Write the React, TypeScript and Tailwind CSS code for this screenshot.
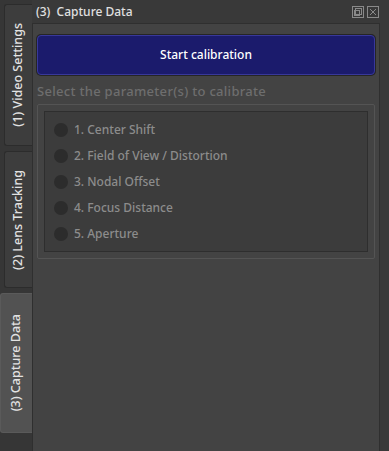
import React from 'react';

const tabs = [
  { label: '(1) Video Settings', h: 'h-[142px]', active: false },
  { label: '(2) Lens Tracking', h: 'h-[137px]', active: false },
  { label: '(3) Capture Data', h: 'h-[140px]', active: true },
];

const params = [
  '1. Center Shift',
  '2. Field of View / Distortion',
  '3. Nodal Offset',
  '4. Focus Distance',
  '5. Aperture',
];

const App = () => {
  return (
    <div
      className="flex w-[389px] h-[451px] bg-[#393939] overflow-hidden"
      style={{ fontFamily: '"Noto Sans", "Open Sans", sans-serif' }}
    >
      {/* vertical tab bar */}
      <div className="flex flex-col w-[32px] pt-[4px] gap-[5px] bg-[#363636]">
        {tabs.map((t) => (
          <div
            key={t.label}
            className={`${t.h} flex items-center justify-center rounded-l-[3px] border border-r-0 ${
              t.active
                ? 'ml-0 bg-[#525252] border-[#5a5a5a]'
                : 'ml-[4px] bg-[#3d3d3d] border-[#2c2c2c]'
            }`}
          >
            <span className="[writing-mode:vertical-rl] rotate-180 text-[12.5px] font-medium text-[#e2e2e2] whitespace-nowrap">
              {t.label}
            </span>
          </div>
        ))}
      </div>

      {/* panel */}
      <div className="flex flex-col flex-1 pr-[9px]">
        <div className="flex items-center justify-between h-[23px] pl-[4px] pr-[1px]">
          <span className="text-[12px] font-medium text-[#e0e0e0]">
            (3)&nbsp; Capture Data
          </span>
          <div className="flex gap-[3px] pt-[1px]">
            <svg width="12" height="12" viewBox="0 0 12 12" fill="none" stroke="#8a8a8a" strokeWidth="1">
              <rect x="0.5" y="0.5" width="11" height="11" />
              <rect x="3.5" y="2.5" width="6" height="6" />
              <rect x="2.5" y="4.5" width="5" height="5" />
            </svg>
            <svg width="12" height="12" viewBox="0 0 12 12" fill="none" stroke="#8a8a8a" strokeWidth="1">
              <rect x="0.5" y="0.5" width="11" height="11" />
              <path d="M3 3 L9 9 M9 3 L3 9" />
            </svg>
          </div>
        </div>

        <div className="flex-1 bg-[#434343] border-l border-t border-r border-[#2f2f2f] px-[4px] pt-[11px]">
          <button className="w-full h-[40px] rounded-[4px] bg-[#1b1b6c] border border-[#38389a] text-white text-[12px] font-medium shadow-[0_0_0_1px_#252525]">
            Start calibration
          </button>

          <div className="mt-[8px] text-[13px] font-medium text-[#6e6e6e] leading-[17px] tracking-[0.3px]">
            Select the parameter(s) to calibrate
          </div>

          <div className="mt-[4px] border border-[#545454] rounded-[2px] p-[6px]">
            <div className="bg-[#3c3c3c] border border-[#2e2e2e] pt-[10px] pb-[9px] pl-[9px] flex flex-col gap-[10px]">
              {params.map((p) => (
                <div key={p} className="flex items-center gap-[6px] h-[16px]">
                  <span className="w-[14px] h-[14px] rounded-full bg-[#2c2c2c]" />
                  <span className="text-[12px] font-medium text-[#8c8c8c]">{p}</span>
                </div>
              ))}
            </div>
          </div>
        </div>
      </div>
    </div>
  );
};

export default App;
